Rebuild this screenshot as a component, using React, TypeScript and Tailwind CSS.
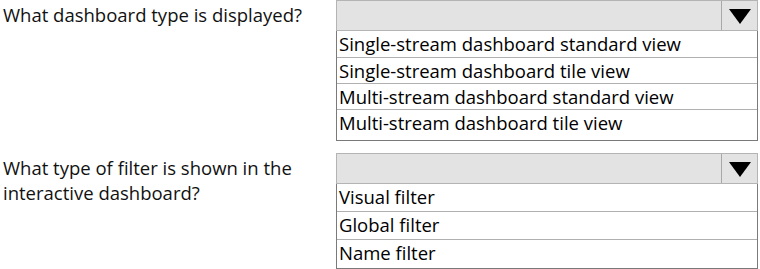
const questions = [
  {
    text: ["What dashboard type is displayed?"],
    options: [
      "Single-stream dashboard standard view",
      "Single-stream dashboard tile view",
      "Multi-stream dashboard standard view",
      "Multi-stream dashboard tile view",
    ],
    rowHeights: ["h-[26px]", "h-[26px]", "h-[26px]", "h-[31px]"],
  },
  {
    text: ["What type of filter is shown in the", "interactive dashboard?"],
    options: ["Visual filter", "Global filter", "Name filter"],
    rowHeights: ["h-[27px]", "h-[28px]", "h-[29px]"],
  },
];

function Dropdown({ options, rowHeights }: { options: string[]; rowHeights: string[] }) {
  return (
    <div className="flex flex-col">
      {/* closed select */}
      <div className="flex h-[31px] border border-[#b4b4b4] bg-[#e3e3e3]">
        <div className="flex-1" />
        <div className="flex w-[36px] items-center justify-center border-l border-[#a8a8a8]">
          <svg width="22" height="16" viewBox="0 0 22 16">
            <polygon points="0,1 22,1 11,16" fill="#000" />
          </svg>
        </div>
      </div>
      {/* options list */}
      <div className="border border-t-0 border-[#7a7a7a]">
        {options.map((o, i) => (
          <div
            key={o}
            className={`${rowHeights[i]} ${i > 0 ? "border-t border-[#b0b0b0]" : ""} px-[2px] text-[18.5px] leading-[25px] text-black`}
          >
            {o}
          </div>
        ))}
      </div>
    </div>
  );
}

export default function App() {
  return (
    <div className="h-[269px] w-[760px] overflow-hidden bg-white font-['Open_Sans',sans-serif] text-[#111]">
      <div className="flex flex-col gap-[12px]">
        {questions.map((q) => (
          <div key={q.text[0]} className="grid grid-cols-[336px_422px]">
            <div className="pl-[3px] pt-[2px] text-[18.5px] leading-[25px]">
              {q.text.map((t) => (
                <div key={t}>{t}</div>
              ))}
            </div>
            <Dropdown options={q.options} rowHeights={q.rowHeights} />
          </div>
        ))}
      </div>
    </div>
  );
}
